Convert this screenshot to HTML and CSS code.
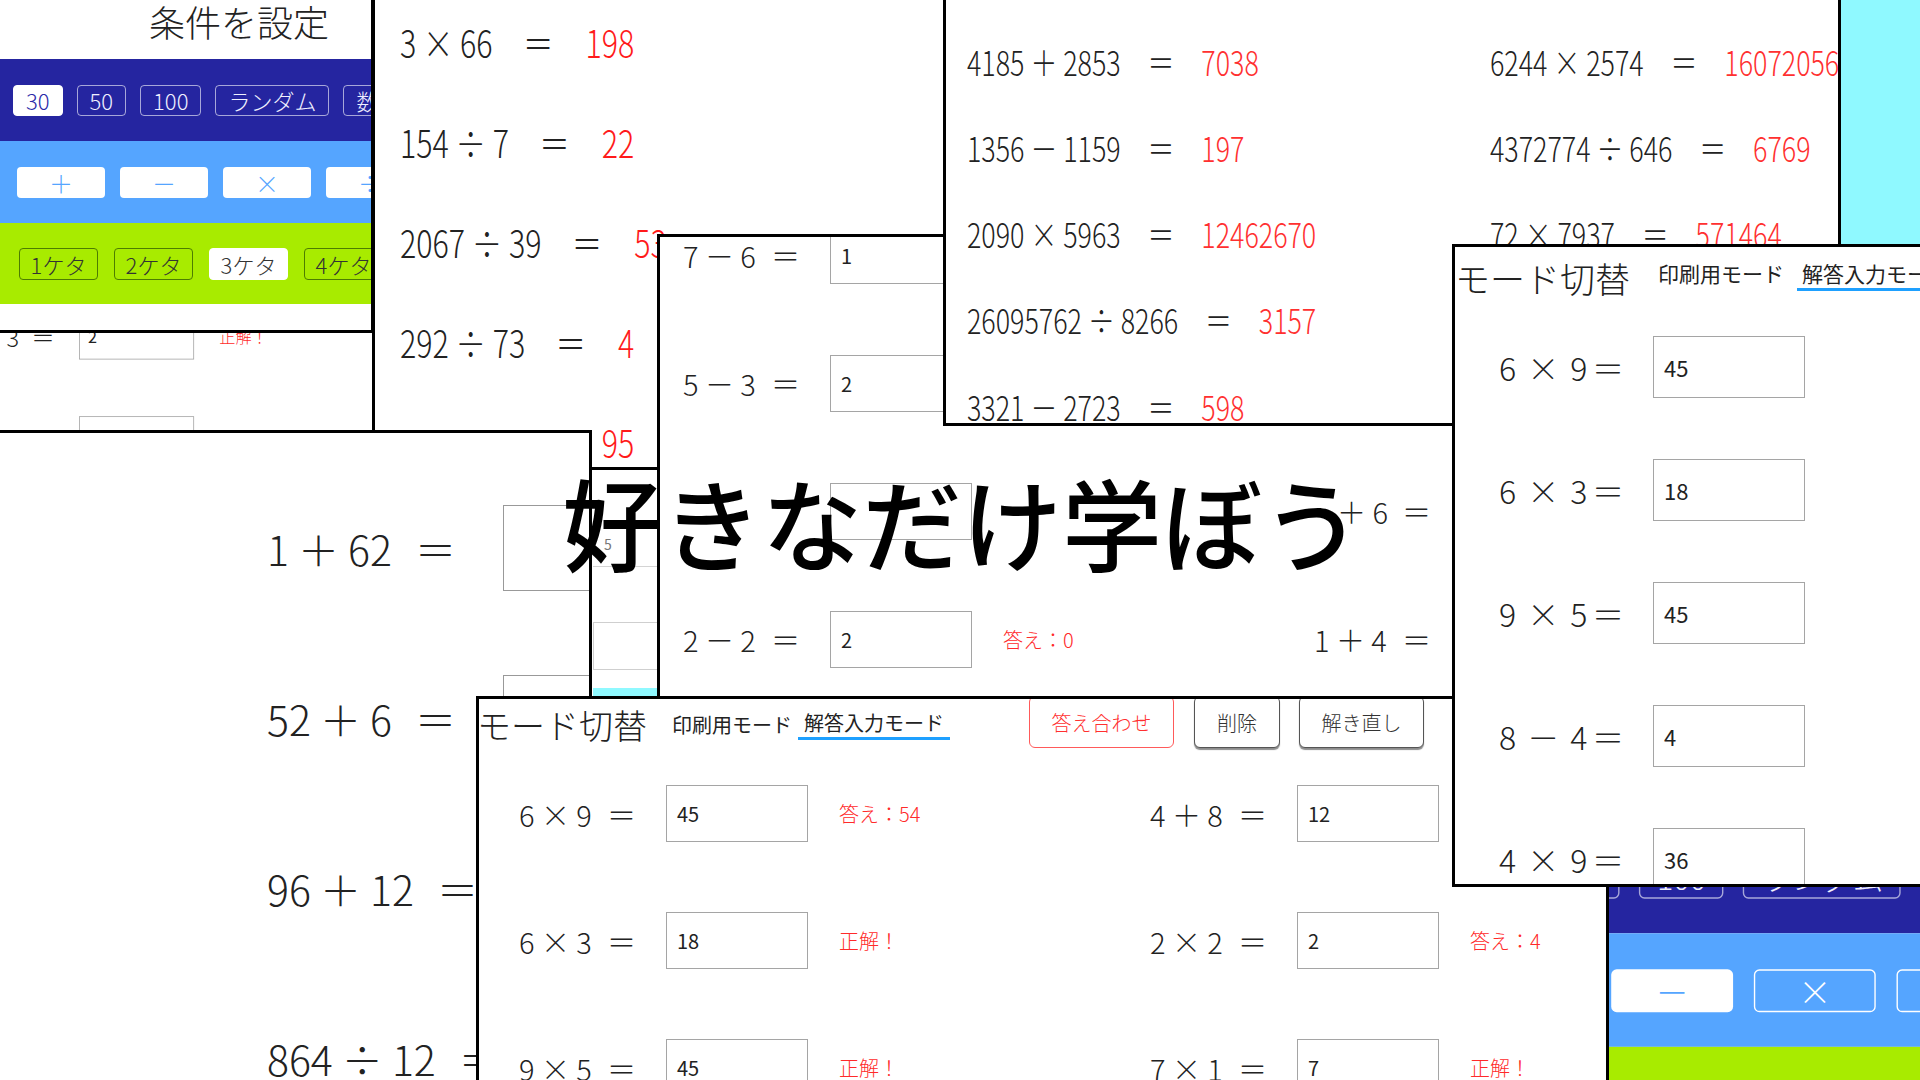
FILE: index.html
```html
<!DOCTYPE html>
<html lang="ja">
<head>
<meta charset="utf-8">
<title>好きなだけ学ぼう</title>
<link rel="stylesheet" href="styles.css">
</head>
<body>
<div class="stage">

  <div class="cyan"></div>

  <div class="win strip">
    <div class="stripBox1"><span class="stripNum">5</span></div>
    <div class="stripBox2"></div>
    <div class="stripBar"></div>
  </div>

  <!-- small answer sheet under the settings -->
  <div class="win w32">
    <div class="sheet">
      <div class="arow">
        <div class="acell"><span class="ex">5 － 3</span><span class="eq">＝</span><span class="box">2</span><span class="res">正解！</span></div>
      </div>
      <div class="arow">
        <div class="acell"><span class="ex">8 － 4</span><span class="eq">＝</span><span class="box"></span></div>
      </div>
    </div>
  </div>

  <!-- settings panel -->
  <div class="win wA">
    <div class="settings">
      <div class="setTitle">条件を設定</div>
      <div class="band dark">
        <span class="sbtn on">30</span><span class="sbtn">50</span><span class="sbtn">100</span><span class="sbtn">ランダム</span><span class="sbtn">数を指定</span>
      </div>
      <div class="band light">
        <span class="obtn">＋</span><span class="obtn">－</span><span class="obtn">×</span><span class="obtn">÷</span>
      </div>
      <div class="band green">
        <span class="klbl"><span>桁数：</span></span><span class="kbtn">1ケタ</span><span class="kbtn">2ケタ</span><span class="kbtn on">3ケタ</span><span class="kbtn">4ケタ</span>
      </div>
    </div>
  </div>

  <!-- print sheet with answers -->
  <div class="win w3">
    <div class="prows">
      <div class="prow"><span class="pin"><span>3 × 66</span><span class="p-eq">＝</span><span class="p-ans">198</span></span></div>
      <div class="prow"><span class="pin"><span>154 ÷ 7</span><span class="p-eq">＝</span><span class="p-ans">22</span></span></div>
      <div class="prow"><span class="pin"><span>2067 ÷ 39</span><span class="p-eq">＝</span><span class="p-ans">53</span></span></div>
      <div class="prow"><span class="pin"><span>292 ÷ 73</span><span class="p-eq">＝</span><span class="p-ans">4</span></span></div>
      <div class="prow"><span class="pin"><span>190 ÷ 2</span><span class="p-eq">＝</span><span class="p-ans">95</span></span></div>
    </div>
  </div>

  <!-- large print sheet -->
  <div class="win wB">
    <div class="brow"><span class="bex">1 ＋ 62</span><span class="beq">＝</span><span class="bbox"></span></div>
    <div class="brow"><span class="bex">52 ＋ 6</span><span class="beq">＝</span><span class="bbox"></span></div>
    <div class="brow"><span class="bex">96 ＋ 12</span><span class="beq">＝</span><span class="bbox"></span></div>
    <div class="brow"><span class="bex">864 ÷ 12</span><span class="beq">＝</span><span class="bbox"></span></div>
  </div>

  <!-- answer sheet (subtraction) -->
  <div class="win w76">
    <div class="sheet">
      <div class="arow">
        <div class="acell"><span class="ex">7 － 6</span><span class="eq">＝</span><span class="box">1</span></div>
        <div class="acell"><span class="ex">3 × 2</span><span class="eq">＝</span><span class="box">6</span></div>
      </div>
      <div class="arow">
        <div class="acell"><span class="ex">5 － 3</span><span class="eq">＝</span><span class="box">2</span></div>
        <div class="acell"><span class="ex">9 － 1</span><span class="eq">＝</span><span class="box">8</span></div>
      </div>
      <div class="arow">
        <div class="acell"><span class="ex"></span><span class="eq"></span><span class="box"></span></div>
        <div class="acell"><span class="ex ex-cut">＋ 6</span><span class="eq">＝</span><span class="box"></span></div>
      </div>
      <div class="arow">
        <div class="acell"><span class="ex">2 － 2</span><span class="eq">＝</span><span class="box">2</span><span class="res">答え：0</span></div>
        <div class="acell"><span class="ex">1 ＋ 4</span><span class="eq">＝</span><span class="box"></span></div>
      </div>
    </div>
  </div>

  <!-- condensed print sheet -->
  <div class="win w4">
    <div class="g4">
      <div class="c4"><span class="pin"><span>4185 ＋ 2853</span><span class="p-eq">＝</span><span class="p-ans">7038</span></span></div>
      <div class="c4"><span class="pin"><span>6244 × 2574</span><span class="p-eq">＝</span><span class="p-ans">16072056</span></span></div>
      <div class="c4"><span class="pin"><span>1356 － 1159</span><span class="p-eq">＝</span><span class="p-ans">197</span></span></div>
      <div class="c4"><span class="pin"><span>4372774 ÷ 646</span><span class="p-eq">＝</span><span class="p-ans">6769</span></span></div>
      <div class="c4"><span class="pin"><span>2090 × 5963</span><span class="p-eq">＝</span><span class="p-ans">12462670</span></span></div>
      <div class="c4"><span class="pin"><span>72 × 7937</span><span class="p-eq">＝</span><span class="p-ans">571464</span></span></div>
      <div class="c4"><span class="pin"><span>26095762 ÷ 8266</span><span class="p-eq">＝</span><span class="p-ans">3157</span></span></div>
      <div class="c4"><span class="pin"><span>8812 － 4410</span><span class="p-eq">＝</span><span class="p-ans">4402</span></span></div>
      <div class="c4"><span class="pin"><span>3321 － 2723</span><span class="p-eq">＝</span><span class="p-ans">598</span></span></div>
      <div class="c4"><span class="pin"><span>5120 ＋ 3377</span><span class="p-eq">＝</span><span class="p-ans">8497</span></span></div>
    </div>
  </div>

  <!-- second settings panel (zoomed) -->
  <div class="win wS2">
    <div class="settings">
      <div class="setTitle">条件を設定</div>
      <div class="band dark">
        <span class="sbtn on">30</span><span class="sbtn">50</span><span class="sbtn">100</span><span class="sbtn">ランダム</span><span class="sbtn">数を指定</span>
      </div>
      <div class="band light">
        <span class="obtn">＋</span><span class="obtn">－</span><span class="obtn off">×</span><span class="obtn off">÷</span>
      </div>
      <div class="band green">
        <span class="klbl"><span>桁数：</span></span><span class="kbtn on">1ケタ</span><span class="kbtn">2ケタ</span><span class="kbtn">3ケタ</span><span class="kbtn">4ケタ</span>
      </div>
    </div>
  </div>

  <!-- bottom answer-input window -->
  <div class="win wBot">
    <div class="hdr">
      <span class="hTitle">モード切替</span>
      <span class="tab">印刷用モード</span>
      <span class="tab sel">解答入力モード</span>
      <span class="hbtn red">答え合わせ</span>
      <span class="hbtn w86">削除</span>
      <span class="hbtn w125">解き直し</span>
    </div>
    <div class="sheet">
      <div class="arow">
        <div class="acell"><span class="ex">6 × 9</span><span class="eq">＝</span><span class="box">45</span><span class="res">答え：54</span></div>
        <div class="acell"><span class="ex">4 ＋ 8</span><span class="eq">＝</span><span class="box">12</span></div>
      </div>
      <div class="arow">
        <div class="acell"><span class="ex">6 × 3</span><span class="eq">＝</span><span class="box">18</span><span class="res">正解！</span></div>
        <div class="acell"><span class="ex">2 × 2</span><span class="eq">＝</span><span class="box">2</span><span class="res">答え：4</span></div>
      </div>
      <div class="arow">
        <div class="acell"><span class="ex">9 × 5</span><span class="eq">＝</span><span class="box">45</span><span class="res">正解！</span></div>
        <div class="acell"><span class="ex">7 × 1</span><span class="eq">＝</span><span class="box">7</span><span class="res">正解！</span></div>
      </div>
    </div>
  </div>

  <!-- right answer-input window -->
  <div class="win wR">
    <div class="hdr rhdr">
      <span class="rTitle">モード切替</span>
      <span class="rTab">印刷用モード</span>
      <span class="rTab sel">解答入力モード</span>
    </div>
    <div class="sheet">
      <div class="arow"><div class="acell"><span class="ex">6 × 9</span><span class="eq">＝</span><span class="box">45</span></div></div>
      <div class="arow"><div class="acell"><span class="ex">6 × 3</span><span class="eq">＝</span><span class="box">18</span></div></div>
      <div class="arow"><div class="acell"><span class="ex">9 × 5</span><span class="eq">＝</span><span class="box">45</span></div></div>
      <div class="arow"><div class="acell"><span class="ex">8 － 4</span><span class="eq">＝</span><span class="box">4</span></div></div>
      <div class="arow"><div class="acell"><span class="ex">4 × 9</span><span class="eq">＝</span><span class="box">36</span></div></div>
    </div>
  </div>

  <h1 class="title">好きなだけ学ぼう</h1>
</div>
</body>
</html>
```

FILE: styles.css
```css
* { box-sizing: border-box; margin: 0; padding: 0; }
html, body { width: 1920px; height: 1080px; overflow: hidden; background: #fff; }
body { font-family: "Noto Sans CJK JP", "Noto Sans", sans-serif; color: #222; }

.stage { position: relative; width: 1920px; height: 1080px; overflow: hidden; background: #fff; }
.win { position: absolute; background: #fff; overflow: hidden; border: 0 solid #000; }

.cyan { position: absolute; left: 1840px; top: 0; width: 80px; height: 250px; background: #8ff9ff; z-index: 1; }

/* strip */
.strip { left: 589px; top: 470px; width: 68px; height: 227px; z-index: 1; padding-left: 4px; display: flex; flex-direction: column; }
.stripBox1 { height: 97px; border-bottom: 1px solid #d4d4d4; padding: 64px 0 0 11px; font-size: 14px; line-height: 20px; color: #777; }
.stripBox2 { margin-top: 55px; height: 48px; border: 1px solid #cfcfcf; border-right: 0; }
.stripBar { margin-top: 18px; height: 8px; background: #8ff9ff; }

/* settings panel */
.settings { width: 371px; }
.setTitle { height: 59px; line-height: 42px; padding-left: 149px; font-size: 36px; font-weight: 300; color: #222; white-space: nowrap; }
.band { display: flex; align-items: center; white-space: nowrap; }
.band.dark { height: 82px; background: #2525a0; gap: 14px; padding-left: 13px; }
.band.light { height: 82px; background: #55a5ff; gap: 15px; padding-left: 17px; }
.band.green { height: 81px; background: #a8eb00; gap: 16px; }
.sbtn { flex: none; height: 31px; padding: 0 12px; border: 1px solid rgba(255,255,255,.6); border-radius: 4px; color: #f0f0ff; font-size: 22px; line-height: 29px; font-weight: 300; }
.sbtn.on { background: #fff; color: #2a2aa8; border-color: #fff; }
.obtn { flex: none; width: 88px; height: 31px; border-radius: 4px; background: #fff; color: #55a5ff; font-size: 24px; line-height: 31px; text-align: center; font-weight: 300; }
.obtn.off { background: transparent; border: 1px solid #fff; color: #fff; line-height: 29px; }
.kbtn { flex: none; width: 79px; height: 32px; border: 1px solid #4d7d00; border-radius: 4px; color: #333; font-size: 22px; line-height: 30px; text-align: center; font-weight: 300; }
.kbtn.on { background: #fff; border-color: #fff; }
.klbl { flex: none; width: 3px; overflow: hidden; display: flex; justify-content: flex-end; font-size: 22px; color: #333; }
.klbl span { flex: none; }

.wA { left: 0; top: 0; width: 374px; height: 333px; border-right-width: 3px; border-bottom-width: 3px; z-index: 3; }
.wS2 { left: 1445px; top: 738px; width: 371px; height: 330px; transform: scale(1.385); transform-origin: 0 0; z-index: 8; }

/* answer sheet rows */
.sheet { display: flex; flex-direction: column; }
.arow { display: flex; align-items: center; height: 127px; flex: none; }
.acell { width: 631px; flex: none; display: flex; align-items: center; white-space: nowrap; }
.ex { width: 88px; flex: none; font-size: 29px; font-weight: 300; }
.ex-cut { padding-left: 23px; }
.eq { width: 59px; flex: none; font-size: 29px; font-weight: 300; }
.box { width: 142px; height: 57px; flex: none; border: 1px solid #a5a5a5; font-size: 20px; padding-left: 10px; display: flex; align-items: center; color: #222; background: #fff; }
.res { margin-left: 31px; color: #ff2a2a; font-size: 20px; font-weight: 300; }

.w32 { left: 0; top: 300px; width: 372px; height: 131px; z-index: 2; }
.w32 .sheet { width: 1300px; transform: translate(-40px, -15px) scale(.81); transform-origin: 0 0; }

/* print sheet */
.w3 { left: 372px; top: 0; width: 575px; height: 470px; border-left-width: 3px; border-bottom-width: 3px; z-index: 4; padding-left: 25px; }
.prows { margin-top: -9px; }
.prow { height: 100px; display: flex; align-items: center; }
.pin { display: inline-flex; align-items: center; white-space: nowrap; font-size: 38px; font-weight: 300; transform: scaleX(.8); transform-origin: 0 50%; }
.p-eq { margin-left: 38px; }
.p-ans { margin-left: 40px; color: #ff1a1a; }

/* big print sheet */
.wB { left: 0; top: 430px; width: 592px; height: 650px; border-top-width: 3px; border-right-width: 3px; z-index: 5; padding: 30px 0 0 267px; }
.brow { height: 170px; display: flex; align-items: center; white-space: nowrap; }
.bex { font-size: 41px; font-weight: 300; }
.beq { font-size: 41px; font-weight: 300; margin-left: 23px; }
.bbox { flex: none; margin-left: 47px; width: 140px; height: 86px; border: 1px solid #999; }

/* subtraction answer sheet */
.w76 { left: 657px; top: 234px; width: 800px; height: 465px; border-top-width: 3px; border-left-width: 3px; z-index: 6; padding-left: 23px; }
.w76 .sheet { margin-top: -46px; }
.w76 .arow { height: 128px; }

/* condensed sheet */
.w4 { left: 943px; top: 0; width: 898px; height: 426px; border-left-width: 3px; border-right-width: 3px; border-bottom-width: 3px; z-index: 7; padding: 18px 0 0 21px; }
.g4 { display: grid; grid-template-columns: 523px 400px; grid-auto-rows: 86.25px; }
.c4 { display: flex; align-items: center; white-space: nowrap; }
.c4 .pin { font-size: 34px; transform: scaleX(.79); }
.c4 .p-eq { margin-left: 34px; }
.c4 .p-ans { margin-left: 34px; color: #ff3030; }

/* bottom window */
.wBot { left: 476px; top: 696px; width: 1133px; height: 384px; border-top-width: 3px; border-left-width: 3px; border-right-width: 3px; z-index: 9; }
.hdr { height: 51px; display: flex; align-items: center; white-space: nowrap; }
.hTitle { font-size: 34px; font-weight: 300; margin-left: -2px; }
.tab { font-size: 20px; line-height: 28px; margin-left: 25px; color: #222; }
.tab.sel { margin-left: 6px; padding: 0 6px; border-bottom: 3px solid #1ea0ff; }
.hbtn { flex: none; align-self: flex-start; margin-top: -3px; height: 52px; display: flex; align-items: center; justify-content: center; font-size: 20px; font-weight: 300; color: #333; border: 1px solid #555; border-radius: 6px; box-shadow: 0 2px 1px rgba(0,0,0,.45); background: #fff; }
.hbtn.red { width: 145px; margin-left: 79px; border-color: #ff5a5a; color: #ff3030; box-shadow: none; }
.hbtn.w86 { width: 86px; margin-left: 20px; }
.hbtn.w125 { width: 125px; margin-left: 19px; }
.wBot .sheet { padding-left: 40px; }

/* right window */
.wR { left: 1452px; top: 244px; width: 470px; height: 643px; border-top-width: 3px; border-left-width: 3px; border-bottom-width: 3px; z-index: 10; }
.rhdr { height: 58.5px; align-items: flex-start; }
.rTitle { font-size: 35px; line-height: 48px; margin-top: 7px; font-weight: 300; }
.rTab { font-size: 21px; line-height: 30px; margin-top: 11px; margin-left: 28px; color: #222; }
.rTab.sel { margin-left: 13px; padding: 0 5px; border-bottom: 3px solid #1ea0ff; }
.wR .sheet { padding-left: 44px; }
.wR .arow { height: 123px; }
.wR .ex { width: 93px; font-size: 32px; letter-spacing: 2px; }
.wR .eq { width: 61px; font-size: 32px; }
.wR .box { width: 152px; height: 62px; font-size: 22px; }

/* title */
.title { position: absolute; left: 562px; top: 471px; font-size: 100px; line-height: 1; font-weight: 500; color: #000; z-index: 20; white-space: nowrap; }
```
